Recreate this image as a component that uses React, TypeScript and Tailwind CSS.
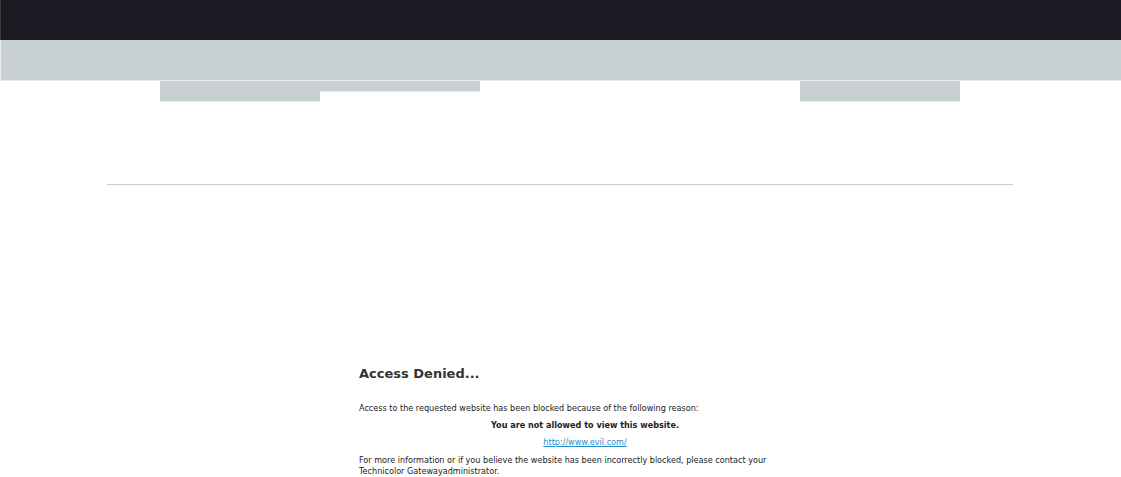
import React from 'react';

const tabs = [
  { w: 'w-[160px]', h: 'h-[21px]', on: true },
  { w: 'w-[160px]', h: 'h-[11px]', on: true },
  { w: 'w-[320px]', h: 'h-0', on: false },
  { w: 'w-[160px]', h: 'h-[21px]', on: true },
];

export default function App() {
  return (
    <div className="w-[1121px] h-[477px] bg-white overflow-hidden font-['DejaVu_Sans',Verdana,sans-serif]">
      <div className="h-[40px] bg-[#1b1a22] border-l border-[#3a3a40]" />
      <div className="h-[41px] bg-[#c8d0d3] border-b border-l border-[#e6eaeb]" />
      <div className="flex h-[21px] pl-[160px]">
        {tabs.map((t, i) => (
          <div
            key={i}
            className={`${t.w} ${t.h} ${t.on ? 'bg-[#c8d0d3] border-b border-[#e6eaeb]' : ''}`}
          />
        ))}
      </div>
      <div className="ml-[107px] mt-[82px] w-[906px] h-px bg-[#c4ccd0]" />
      <div className="ml-[359px] w-[452px] pt-[181px] text-[#222] text-[8.1px] leading-[11px]">
        <h1 className="text-[13px] font-bold text-[#333] leading-[16px]">Access Denied...</h1>
        <p className="mt-[21px]">Access to the requested website has been blocked because of the following reason:</p>
        <p className="mt-[6px] text-center font-bold">You are not allowed to view this website.</p>
        <p className="mt-[6px] text-center">
          <a href="#" className="text-[#1a8fd0] underline">http://www.evil.com/</a>
        </p>
        <p className="mt-[7px]">
          For more information or if you believe the website has been incorrectly blocked, please contact your Technicolor Gatewayadministrator.
        </p>
      </div>
    </div>
  );
}
